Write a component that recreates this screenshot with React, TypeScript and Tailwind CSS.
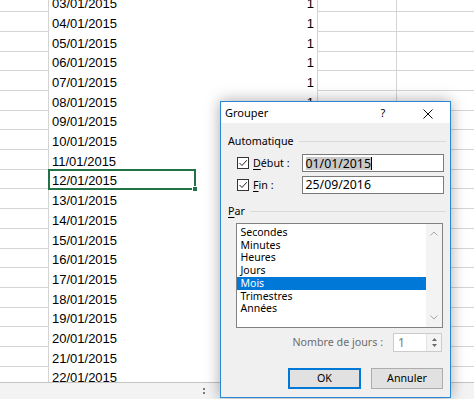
import React from "react";

const dates = Array.from({ length: 21 }, (_, i) => `${String(i + 3).padStart(2, "0")}/01/2015`);
const units = ["Secondes", "Minutes", "Heures", "Jours", "Mois", "Trimestres", "Années"];

function SheetRow({ date, selected }: { date: string; selected: boolean }) {
    return (
        <div className="flex h-[19.7px] text-[13px] leading-[15px] text-black">
            <div className="w-[49px] shrink-0 border-r border-b border-[#d4d4d4]" />
            <div className="relative w-[146px] shrink-0 flex items-end pl-[3px] pb-[1px]">
                {date}
                {selected && (
                    <div className="absolute -left-[1px] -top-[1px] -right-[1px] -bottom-[1px] border-2 border-[#217346]">
                        <div className="absolute -right-[4px] -bottom-[4px] w-[6px] h-[6px] bg-[#217346] border border-white" />
                    </div>
                )}
            </div>
            <div className="w-[123px] shrink-0 flex items-end justify-end pr-[3px] pb-[1px] border-r border-[#d4d4d4]">
                1
            </div>
            <div className="w-[79px] shrink-0 border-r border-b border-[#d4d4d4]" />
            <div className="flex-1 border-b border-[#d4d4d4]" />
        </div>
    );
}

function Checkbox() {
    return (
        <div className="w-[12px] h-[12px] shrink-0 border border-[#333333] bg-white flex items-center justify-center">
            <svg width="10" height="10" viewBox="0 0 10 10">
                <path d="M1.5 5 L4 7.5 L8.8 2.2" fill="none" stroke="#222" strokeWidth="1" />
            </svg>
        </div>
    );
}

function GroupHeader({ children }: { children: React.ReactNode }) {
    return (
        <div className="flex items-center h-[14px] gap-[5px]">
            <span>{children}</span>
            <div className="flex-1 border-t border-[#d9d9d9]" />
        </div>
    );
}

function GroupDialog() {
    return (
        <div className="absolute left-[220px] top-[101px] w-[231px] h-[297px] border border-[#2b87d3] bg-[#f0f0f0] shadow-[0_0_14px_rgba(0,0,0,0.35)] flex flex-col font-['Noto_Sans',sans-serif] text-black">
            {/* barre de titre */}
            <div className="h-[21px] shrink-0 bg-white flex items-center pt-[2px] text-[11px]">
                <span className="flex-1 pl-[4px]">Grouper</span>
                <span className="w-[44px] text-center text-[11px]">?</span>
                <div className="w-[45px] flex justify-center">
                    <svg width="10" height="10" viewBox="0 0 10 10">
                        <path d="M0.5 0.5 L9.5 9.5 M9.5 0.5 L0.5 9.5" stroke="#111" strokeWidth="1" />
                    </svg>
                </div>
            </div>

            <div className="flex-1 flex flex-col pl-[7px] pr-[4px] pt-[11px] text-[10.7px]">
                <GroupHeader>Automatique</GroupHeader>

                <div className="mt-[6px] h-[18px] flex items-center">
                    <div className="ml-[9px]">
                        <Checkbox />
                    </div>
                    <span className="ml-[4px]">
                        <span className="underline underline-offset-2">D</span>ébut :
                    </span>
                    <div className="ml-auto mr-[2px] w-[142px] h-full border border-[#7a7a7a] bg-white flex items-center pl-[2.5px] text-[12.3px] leading-[16px]">
                        <span className="bg-[#c9c9c9] leading-[13px]">01/01/2015</span>
                        <span className="w-px h-[13px] bg-black" />
                    </div>
                </div>

                <div className="mt-[4px] h-[18px] flex items-center">
                    <div className="ml-[9px]">
                        <Checkbox />
                    </div>
                    <span className="ml-[4px]">
                        <span className="underline underline-offset-2">F</span>in :
                    </span>
                    <div className="ml-auto mr-[2px] w-[142px] h-full border border-[#7a7a7a] bg-white flex items-center pl-[2.5px] text-[12.3px] leading-[16px]">
                        25/09/2016
                    </div>
                </div>

                <div className="mt-[10px]">
                    <GroupHeader>
                        <span className="underline underline-offset-2">P</span>ar
                    </GroupHeader>
                </div>

                <div className="mt-[5px] ml-[8px] w-[207px] h-[105px] border border-[#828282] bg-white flex">
                    <div className="flex-1 pt-[2px] text-[10.5px] leading-[12.7px]">
                        {units.map((u) => (
                            <div
                                key={u}
                                className={
                                    u === "Mois"
                                        ? "pl-[3.5px] bg-[#0078d7] text-white"
                                        : "pl-[3.5px]"
                                }
                            >
                                {u}
                            </div>
                        ))}
                    </div>
                    <div className="w-[16px] bg-[#f3f3f3] flex flex-col items-center justify-between py-[7px]">
                        <svg width="8" height="5" viewBox="0 0 8 5">
                            <path d="M0.5 4.5 L4 1 L7.5 4.5" fill="none" stroke="#a8a8a8" strokeWidth="1" />
                        </svg>
                        <svg width="8" height="5" viewBox="0 0 8 5">
                            <path d="M0.5 0.5 L4 4 L7.5 0.5" fill="none" stroke="#a8a8a8" strokeWidth="1" />
                        </svg>
                    </div>
                </div>

                <div className="mt-[5px] h-[19px] flex items-center justify-end gap-[10px] mr-[4px]">
                    <span className="text-[#6d6d6d]">Nombre de jours :</span>
                    <div className="w-[49px] h-full border border-[#cccccc] bg-white flex">
                        <div className="flex-1 pl-[4px] flex items-center text-[12px] text-[#7a7a7a]">1</div>
                        <div className="w-[15px] border-l border-[#e3e3e3] bg-[#f4f4f4] flex flex-col items-center justify-center gap-[3px]">
                            <svg width="5" height="3" viewBox="0 0 5 3">
                                <path d="M0 3 L2.5 0 L5 3 Z" fill="#6a6a6a" />
                            </svg>
                            <svg width="5" height="3" viewBox="0 0 5 3">
                                <path d="M0 0 L2.5 3 L5 0 Z" fill="#6a6a6a" />
                            </svg>
                        </div>
                    </div>
                </div>

                <div className="mt-[16px] h-[21px] flex justify-end gap-[10px] mr-[3px]">
                    <button className="w-[73px] h-full border-2 border-[#0078d7] bg-[#e1e1e1] flex items-center justify-center">
                        OK
                    </button>
                    <button className="w-[72px] h-full border border-[#adadad] bg-[#e1e1e1] flex items-center justify-center">
                        Annuler
                    </button>
                </div>
            </div>
        </div>
    );
}

export default function App() {
    return (
        <div className="relative w-[474px] h-[399px] overflow-hidden bg-white flex flex-col font-['Liberation_Sans',Arial,sans-serif]">
            <div className="flex-1 overflow-hidden">
                <div className="-mt-[7.4px]">
                    {dates.map((d, i) => (
                        <SheetRow key={d} date={d} selected={i === 9} />
                    ))}
                </div>
            </div>

            {/* barre des onglets */}
            <div className="h-[17px] shrink-0 border-t border-[#c3c3c3] bg-[#f3f3f3] flex items-center">
                <div className="ml-[203px] flex flex-col gap-[2.5px]">
                    <div className="w-[1.5px] h-[1.5px] bg-[#7a7a7a]" />
                    <div className="w-[1.5px] h-[1.5px] bg-[#7a7a7a]" />
                </div>
            </div>

            <GroupDialog />
        </div>
    );
}
